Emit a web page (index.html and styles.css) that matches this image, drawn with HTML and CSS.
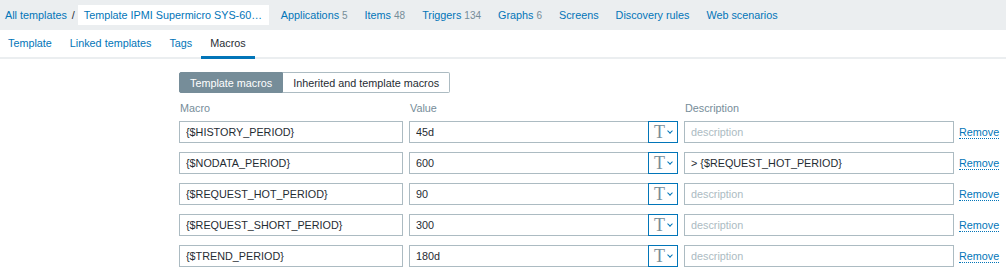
FILE: index.html
```html
<!DOCTYPE html>
<html lang="en">
<head>
    <meta charset="UTF-8">
    <title>Template macros</title>
    <link rel="stylesheet" href="styles.css">
</head>
<body>
    <div class="header-nav">
        <a href="#" class="crumb">All templates</a>
        <span class="sep">/</span>
        <span class="current"><a href="#">Template IPMI Supermicro SYS-60…</a></span>
        <a href="#" class="nav-link">Applications <span class="count">5</span></a>
        <a href="#" class="nav-link">Items <span class="count">48</span></a>
        <a href="#" class="nav-link">Triggers <span class="count">134</span></a>
        <a href="#" class="nav-link">Graphs <span class="count">6</span></a>
        <a href="#" class="nav-link">Screens</a>
        <a href="#" class="nav-link">Discovery rules</a>
        <a href="#" class="nav-link">Web scenarios</a>
    </div>

    <div class="tabs">
        <a href="#" class="tab">Template</a>
        <a href="#" class="tab">Linked templates</a>
        <a href="#" class="tab">Tags</a>
        <a href="#" class="tab active">Macros</a>
    </div>

    <div class="form">
        <div class="radio-list">
            <span class="radio checked">Template macros</span>
            <span class="radio">Inherited and template macros</span>
        </div>

        <div class="macros">
            <div class="head">Macro</div>
            <div class="head">Value</div>
            <div class="head">Description</div>
            <div></div>

            <input class="field" type="text" value="{$HISTORY_PERIOD}">
            <div class="value"><input class="field" type="text" value="45d"><button class="type-btn"><span>T</span><i></i></button></div>
            <input class="field" type="text" placeholder="description">
            <a href="#" class="remove">Remove</a>

            <input class="field" type="text" value="{$NODATA_PERIOD}">
            <div class="value"><input class="field" type="text" value="600"><button class="type-btn"><span>T</span><i></i></button></div>
            <input class="field" type="text" value="> {$REQUEST_HOT_PERIOD}">
            <a href="#" class="remove">Remove</a>

            <input class="field" type="text" value="{$REQUEST_HOT_PERIOD}">
            <div class="value"><input class="field" type="text" value="90"><button class="type-btn"><span>T</span><i></i></button></div>
            <input class="field" type="text" placeholder="description">
            <a href="#" class="remove">Remove</a>

            <input class="field" type="text" value="{$REQUEST_SHORT_PERIOD}">
            <div class="value"><input class="field" type="text" value="300"><button class="type-btn"><span>T</span><i></i></button></div>
            <input class="field" type="text" placeholder="description">
            <a href="#" class="remove">Remove</a>

            <input class="field" type="text" value="{$TREND_PERIOD}">
            <div class="value"><input class="field" type="text" value="180d"><button class="type-btn"><span>T</span><i></i></button></div>
            <input class="field" type="text" placeholder="description">
            <a href="#" class="remove">Remove</a>
        </div>
    </div>
</body>
</html>
```

FILE: styles.css
```css
body {
    margin: 0;
    font-family: "Liberation Sans", Arial, sans-serif;
    font-size: 10.8px;
    color: #1f2c33;
    background: #fff;
}
a {
    color: #0275b8;
    text-decoration: none;
}
.header-nav {
    display: flex;
    align-items: center;
    height: 30px;
    padding-left: 5px;
    background: #ebeef0;
    white-space: nowrap;
}
.sep {
    margin: 0 0 0 5px;
    color: #1f2c33;
}
.current {
    display: flex;
    align-items: center;
    width: 191px;
    height: 20px;
    padding-left: 6px;
    box-sizing: border-box;
    background: #fff;
    margin-left: 3px;
    margin-right: 3px;
}
.nav-link {
    padding: 0 8px 0 9px;
}
.count {
    color: #768d99;
    font-size: 10px;
}
.tabs {
    display: flex;
    height: 27px;
    border-bottom: 2px solid #ebeef0;
}
.tab {
    display: flex;
    align-items: center;
    padding: 0 9px;
    border-bottom: 3px solid transparent;
    margin-bottom: -2px;
}
.tab:first-child {
    padding-left: 8px;
}
.tab.active {
    color: #1f2c33;
    border-bottom-color: #0275b8;
}
.form {
    padding: 13px 0 0 179px;
}
.radio-list {
    display: flex;
    height: 21px;
}
.radio {
    display: flex;
    align-items: center;
    padding: 0 10px;
    border: 1px solid #acbbc2;
    color: #1f2c33;
}
.radio.checked {
    background: #768d99;
    border-color: #768d99;
    color: #fff;
    border-radius: 2px 0 0 2px;
    padding: 0 10px 0 10px;
}
.radio:last-child {
    border-left: none;
    border-radius: 0 2px 2px 0;
}
.macros {
    display: grid;
    grid-template-columns: 224px 269px 270px auto;
    column-gap: 6px;
    row-gap: 9px;
    margin-top: 10px;
    width: 827px;
    align-items: center;
}
.head {
    color: #768d99;
    height: 10px;
    line-height: 10px;
    margin-bottom: -1px;
    padding-left: 1px;
}
.field {
    box-sizing: border-box;
    height: 22px;
    width: 100%;
    margin: 0;
    padding: 0 6px;
    border: 1px solid #acbbc2;
    border-radius: 0;
    font-family: inherit;
    font-size: 10.8px;
    color: #1f2c33;
    background: #fff;
}
.field::placeholder {
    color: #acbbc2;
}
.value {
    display: flex;
}
.type-btn {
    flex: none;
    display: flex;
    align-items: center;
    justify-content: center;
    gap: 3px;
    width: 30px;
    height: 22px;
    padding: 0;
    margin-left: -1px;
    border: 1px solid #0275b8;
    background: #fff;
}
.type-btn span {
    font-family: "Liberation Serif", serif;
    font-size: 18px;
    color: #768d99;
    line-height: 1;
}
.type-btn i {
    width: 3px;
    height: 3px;
    border-right: 1px solid #0275b8;
    border-bottom: 1px solid #0275b8;
    transform: rotate(45deg);
    margin-top: -2px;
}
.remove {
    justify-self: start;
    margin-left: -1px;
    border-bottom: 1px dotted #0275b8;
    line-height: 12px;
}
```
